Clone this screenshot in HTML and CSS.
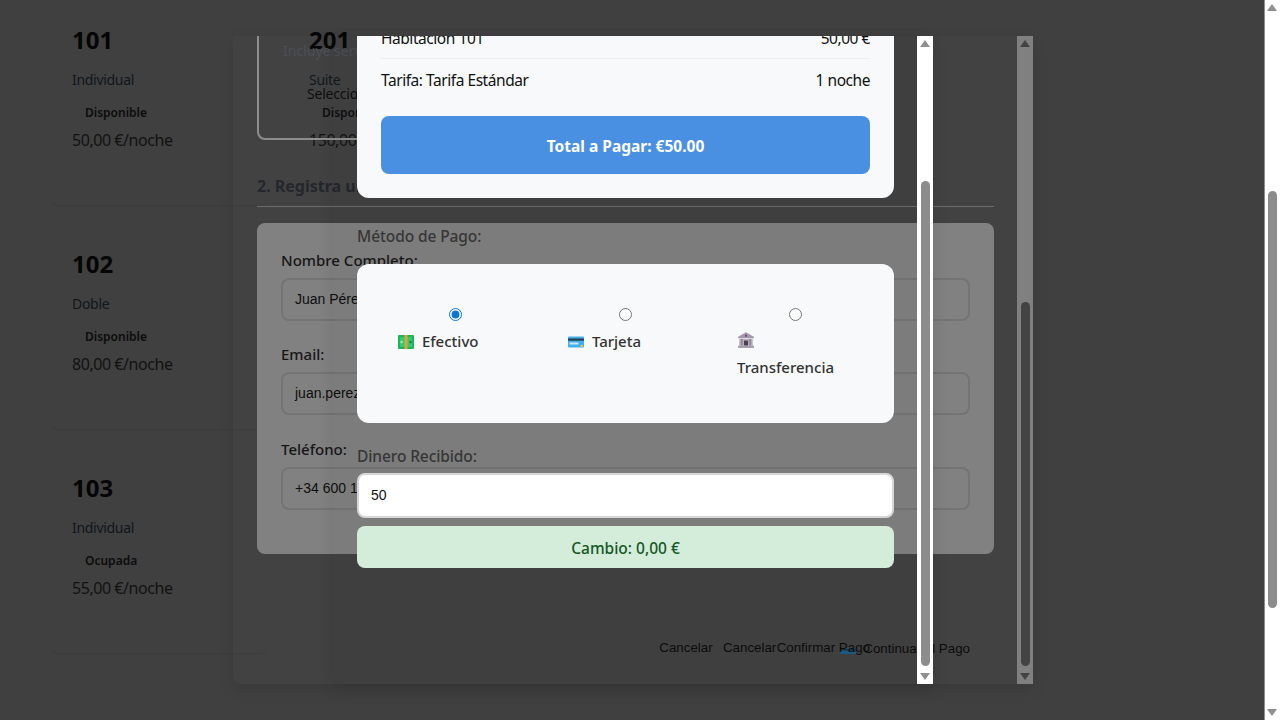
FILE: index.html
```html
<!DOCTYPE html>
<html lang="es">
<head>
    <meta charset="UTF-8">
    <meta name="viewport" content="width=device-width, initial-scale=1.0">
    <title>Reservas - Pago</title>
    <link rel="stylesheet" href="styles.css">
</head>
<body>
    <div class="page">
        <main class="stage">
            <!-- rooms behind both modals -->
            <section class="rooms">
                <article class="room">
                    <h3 class="room-number">101</h3>
                    <p class="room-type">Individual</p>
                    <p class="room-status">Disponible</p>
                    <p class="room-price">50,00 €/noche</p>
                </article>
                <article class="room room-hidden-edge">
                    <h3 class="room-number">201</h3>
                    <p class="room-type">Suite</p>
                    <p class="room-status">Disponible</p>
                    <p class="room-price">150,00 €/noche</p>
                </article>
                <article class="room">
                    <h3 class="room-number">102</h3>
                    <p class="room-type">Doble</p>
                    <p class="room-status">Disponible</p>
                    <p class="room-price">80,00 €/noche</p>
                </article>
                <div></div>
                <article class="room">
                    <h3 class="room-number">103</h3>
                    <p class="room-type">Individual</p>
                    <p class="room-status">Ocupada</p>
                    <p class="room-price">55,00 €/noche</p>
                </article>
            </section>

            <!-- booking modal -->
            <div class="modal modal-booking">
                <div class="modal-body">
                    <div class="rate-card">
                        <p class="rate-note">Incluye servicios</p>
                        <p class="rate-selected">Seleccionada</p>
                    </div>
                    <h2 class="section-title">2. Registra un Huésped</h2>
                    <form class="guest-form">
                        <label class="guest-label">Nombre Completo:</label>
                        <div class="guest-input">Juan Pérez</div>
                        <label class="guest-label">Email:</label>
                        <div class="guest-input">juan.perez@email.com</div>
                        <label class="guest-label">Teléfono:</label>
                        <div class="guest-input">+34 600 123 456</div>
                    </form>
                    <div class="modal-footer footer-booking">
                        <button class="btn" type="button">Cancelar</button>
                        <button class="btn btn-next" type="button">
                            <svg class="btn-icon" viewBox="0 0 16 6"><rect width="16" height="6" fill="#1d5c85"/><rect y="1" width="16" height="1.5" fill="#22313a"/></svg>
                            Continuar al Pago
                        </button>
                    </div>
                </div>
                <div class="scrollbar scrollbar-dim">
                    <span class="arrow-up"></span>
                    <span class="thumb thumb-booking"></span>
                    <span class="arrow-down"></span>
                </div>
            </div>

            <!-- payment modal -->
            <div class="modal modal-payment">
                <div class="modal-body">
                    <div class="summary">
                        <div class="summary-row"><span>Habitación 101</span><span>50,00 €</span></div>
                        <div class="summary-row"><span>Tarifa: Tarifa Estándar</span><span>1 noche</span></div>
                        <div class="total">Total a Pagar: €50.00</div>
                    </div>

                    <p class="pay-label pay-label-method">Método de Pago:</p>
                    <div class="methods">
                        <label class="method">
                            <input type="radio" name="method" checked>
                            <span class="method-text">
                                <svg class="emoji" viewBox="0 0 16 14"><rect width="16" height="14" rx="1" fill="#1fb35c"/><rect x="2" y="2" width="12" height="10" fill="#37c871"/><rect x="6.5" width="3" height="14" fill="#e2a13a"/><circle cx="3.6" cy="7" r="1.3" fill="#a5e8bd"/><circle cx="12.4" cy="7" r="1.3" fill="#148a45"/></svg>
                                Efectivo
                            </span>
                        </label>
                        <label class="method">
                            <input type="radio" name="method">
                            <span class="method-text">
                                <svg class="emoji" viewBox="0 0 16 14"><rect y="1.5" width="16" height="11" rx="1" fill="#41b0ea"/><rect y="3.5" width="16" height="2.2" fill="#23404f"/><rect x="1.5" y="7.5" width="9" height="2" fill="#cfe6f3"/><rect x="12.5" y="10" width="2.5" height="1.8" fill="#f3c53f"/></svg>
                                Tarjeta
                            </span>
                        </label>
                        <label class="method">
                            <input type="radio" name="method">
                            <span class="method-text">
                                <svg class="emoji emoji-bank" viewBox="0 0 16 16"><path d="M8 1 15 5v1.5H1V5z" fill="#a397ab"/><circle cx="8" cy="4.2" r="1" fill="#6a4c8c"/><rect x="2" y="7" width="12" height="6" fill="#b9b0bf"/><rect x="3.5" y="7" width="1.5" height="6" fill="#8d8394"/><rect x="11" y="7" width="1.5" height="6" fill="#8d8394"/><rect x="6.2" y="8.5" width="3.6" height="4.5" fill="#4b4052"/><rect x="1" y="13" width="14" height="2" fill="#a397ab"/></svg>
                                Transferencia
                            </span>
                        </label>
                    </div>

                    <p class="pay-label pay-label-cash">Dinero Recibido:</p>
                    <input class="cash-input" type="text" value="50">
                    <div class="change">Cambio: 0,00 €</div>

                    <div class="modal-footer footer-payment">
                        <button class="btn" type="button">Cancelar</button>
                        <button class="btn" type="button">Confirmar Pago</button>
                    </div>
                </div>
                <div class="scrollbar">
                    <span class="arrow-up"></span>
                    <span class="thumb thumb-payment"></span>
                    <span class="arrow-down"></span>
                </div>
            </div>
        </main>
        <div class="scrollbar scrollbar-page">
            <span class="arrow-up"></span>
            <span class="thumb thumb-page"></span>
            <span class="arrow-down"></span>
        </div>
    </div>
</body>
</html>
```

FILE: styles.css
```css
* {
    box-sizing: border-box;
}
body {
    margin: 0;
    background-color: #404040;
    font-family: "Noto Sans", "Open Sans", sans-serif;
    overflow: hidden;
}
p, h2, h3 {
    margin: 0;
}
.page {
    display: flex;
    height: 720px;
}
.stage {
    position: relative;
    width: 1264px;
    height: 720px;
    overflow: hidden;
}

/* rooms */
.rooms {
    display: grid;
    grid-template-columns: 218px 218px;
    grid-auto-rows: 218px;
    gap: 6px 19px;
    margin: -13px 0 0 50px;
}
.room {
    padding: 37px 22px 0;
    border-radius: 8px;
    box-shadow: 0 1px 1px rgba(0, 0, 0, 0.07);
}
.room-hidden-edge {
    box-shadow: none;
}
.room-number {
    font-size: 24px;
    line-height: 32px;
    font-weight: 700;
    color: #050505;
}
.room-type {
    margin-top: 14px;
    font-size: 14px;
    line-height: 20px;
    letter-spacing: -0.3px;
    color: #10161c;
}
.room-status {
    margin-top: 15px;
    padding-left: 13px;
    font-size: 12px;
    line-height: 16px;
    font-weight: 600;
    color: #0c0c0c;
}
.room-price {
    margin-top: 8px;
    font-size: 16px;
    line-height: 22px;
    letter-spacing: -0.45px;
    color: #121212;
}

/* modals */
.modal {
    position: absolute;
    top: 36px;
    height: 648px;
    display: flex;
    border-radius: 0 0 0 8px;
    overflow: hidden;
}
.modal-booking {
    left: 233px;
    width: 800px;
    background-color: rgba(255, 255, 255, 0.012);
    box-shadow: 0 6px 16px rgba(0, 0, 0, 0.1);
}
.modal-payment {
    left: 333px;
    width: 600px;
    background-color: rgba(0, 0, 0, 0.03);
    box-shadow: 0 6px 16px rgba(0, 0, 0, 0.1);
}
.modal-body {
    flex: 1;
    min-width: 0;
    padding: 0 23px 0 24px;
}
.modal-footer {
    display: flex;
    justify-content: flex-end;
    align-items: flex-start;
    gap: 16px;
}
.footer-booking {
    margin-top: 84px;
}
.footer-payment {
    margin-top: 70px;
}
.btn {
    display: flex;
    align-items: center;
    padding: 0 24px;
    border: 0;
    background: none;
    font-family: "Liberation Sans", Arial, sans-serif;
    font-size: 13.333px;
    line-height: 20px;
    color: #0c0c0c;
    white-space: nowrap;
}
.btn-next {
    padding-top: 1px;
}
.btn-icon {
    width: 16px;
    height: 6px;
    margin: 4px 7px 0 0;
}

/* booking modal content */
.rate-card {
    height: 168px;
    width: 240px;
    margin-top: -64px;
    padding: 67px 24px 0 24px;
    border: 2px solid #8d8d8d;
    border-radius: 8px;
}
.rate-note {
    font-size: 14px;
    line-height: 20px;
    color: #4b5056;
    white-space: nowrap;
}
.rate-selected {
    margin: 25px 0 0 24px;
    font-size: 14px;
    line-height: 16px;
    letter-spacing: -0.2px;
    color: #0e0e0e;
    white-space: nowrap;
}
.section-title {
    height: 33px;
    margin-top: 34px;
    border-bottom: 1px solid #6c6c6c;
    font-size: 16px;
    line-height: 24px;
    font-weight: 700;
    color: #24272b;
}
.guest-form {
    margin-top: 16px;
    padding: 26px 24px 22px;
    border-radius: 8px;
    background-color: #818181;
}
.guest-label {
    display: block;
    font-size: 15px;
    line-height: 22px;
    font-weight: 500;
    color: #161616;
}
.guest-input {
    height: 43px;
    margin: 7px 0 22.25px;
    padding: 0 12px;
    border: 2px solid #747474;
    border-radius: 8px;
    font-family: "Liberation Sans", Arial, sans-serif;
    font-size: 14px;
    line-height: 39px;
    color: #0e0e0e;
}

/* payment modal content */
.summary {
    margin-top: -44px;
    padding: 24px;
    border-radius: 12px;
    background-color: #f8f9fa;
}
.summary-row {
    display: flex;
    justify-content: space-between;
    padding: 10px 0;
    font-size: 15.5px;
    line-height: 22px;
    letter-spacing: -0.45px;
    color: #111;
}
.summary-row:first-child {
    padding: 11px 0 9px;
    border-bottom: 1px solid #edeef0;
}
.total {
    height: 58px;
    margin-top: 15px;
    border-radius: 8px;
    background-color: #4a90e2;
    font-size: 15.5px;
    line-height: 60px;
    font-weight: 700;
    color: #fff;
    text-align: center;
}
.pay-label {
    font-size: 15.5px;
    line-height: 22px;
    font-weight: 500;
    letter-spacing: -0.1px;
    color: #363636;
}
.pay-label-method {
    margin-top: 27px;
}
.pay-label-cash {
    margin-top: 22px;
}
.methods {
    display: grid;
    grid-template-columns: repeat(3, 116px);
    column-gap: 54px;
    height: 159px;
    margin-top: 17px;
    padding: 40px 40px 0;
    border-radius: 12px;
    background-color: #f8f9fa;
}
.method input {
    display: block;
    margin: 4px auto 7px;
    accent-color: #0b76d8;
}
.method-text {
    font-size: 15px;
    line-height: 26px;
    font-weight: 500;
    color: #333;
}
.emoji {
    width: 16px;
    height: 14px;
    margin: 0 4px 0 1px;
    vertical-align: -2px;
}
.emoji-bank {
    width: 18px;
    height: 18px;
    margin-left: 0;
}
.cash-input {
    display: block;
    width: 100%;
    height: 45px;
    margin-top: 6px;
    padding: 0 12px 2px;
    border: 2px solid #d6d6d6;
    border-radius: 8px;
    background-color: #fff;
    font-family: "Liberation Sans", Arial, sans-serif;
    font-size: 14px;
    color: #111;
}
.change {
    height: 42px;
    margin-top: 8px;
    border-radius: 8px;
    background-color: #d4edda;
    font-size: 15.5px;
    line-height: 44px;
    font-weight: 500;
    color: #155724;
    text-align: center;
}

/* scrollbars */
.scrollbar {
    display: flex;
    flex-direction: column;
    align-items: center;
    flex: none;
    width: 16px;
    background-color: #fff;
}
.scrollbar-dim {
    background-color: #808080;
    --bar: #434343;
}
.scrollbar-page {
    border-left: 1px solid #8c8c8c;
    padding-right: 1px;
}
.arrow-up, .arrow-down {
    flex: none;
    width: 0;
    height: 0;
    border-left: 5px solid transparent;
    border-right: 5px solid transparent;
}
.arrow-up {
    margin-top: 4px;
    border-bottom: 7px solid var(--bar, #8f8f8f);
}
.arrow-down {
    margin-top: auto;
    margin-bottom: 4px;
    border-top: 7px solid var(--bar, #8f8f8f);
}
.thumb {
    flex: none;
    width: 9px;
    border-radius: 5px;
    background-color: var(--bar, #8c8c8c);
}
.thumb-payment {
    height: 485px;
    margin-top: 134px;
}
.thumb-booking {
    height: 364px;
    margin-top: 255px;
}
.thumb-page {
    height: 417px;
    margin-top: 180px;
}
```
